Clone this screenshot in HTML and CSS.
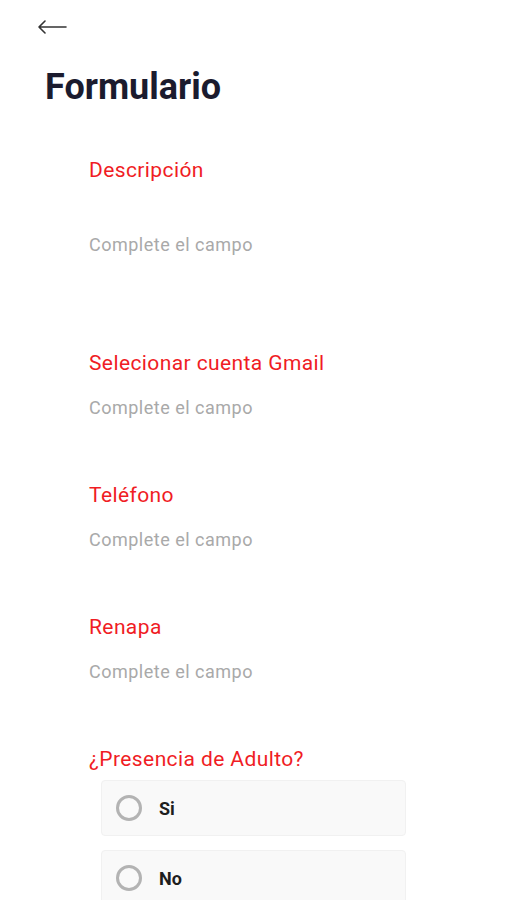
FILE: index.html
```html
<!DOCTYPE html>
<html lang="es">
<head>
	<meta charset="UTF-8">
	<title>Formulario</title>
	<link rel="stylesheet" href="styles.css">
</head>
<body>
	<div class="top">
		<svg class="back" width="30" height="14" viewBox="0 0 30 14">
			<path d="M29 7H2M8 1L2 7l6 6" fill="none" stroke="#333" stroke-width="1.6" stroke-linecap="round" stroke-linejoin="round"/>
		</svg>
	</div>
	<h1 class="title">Formulario</h1>
	<div class="form">
		<div class="field">
			<div class="label">Descripción</div>
			<div class="input multi">Complete el campo</div>
		</div>
		<div class="field">
			<div class="label">Selecionar cuenta Gmail</div>
			<div class="input">Complete el campo</div>
		</div>
		<div class="field">
			<div class="label">Teléfono</div>
			<div class="input">Complete el campo</div>
		</div>
		<div class="field">
			<div class="label">Renapa</div>
			<div class="input">Complete el campo</div>
		</div>
		<div class="field">
			<div class="label">¿Presencia de Adulto?</div>
			<div class="options">
				<div class="option"><span class="radio"></span><span class="opt-text">Si</span></div>
				<div class="option"><span class="radio"></span><span class="opt-text">No</span></div>
			</div>
		</div>
	</div>
</body>
</html>
```
FILE: styles.css
```css
*{box-sizing: border-box;}
body{margin: 0;background: #fff;font-family: Roboto, "Noto Sans", sans-serif;}
.top{height: 54px;padding: 20px 0 0 37px;}
.back{display: block;}
.title{margin: 13px 0 0 45px;font-size: 36px;line-height: 40px;font-weight: 700;color: #1b1b2e;}
.form{padding: 51px 0 0 89px;}
.label{font-size: 21px;line-height: 24px;letter-spacing: 0.4px;color: #f01c24;}
.input{font-size: 18px;line-height: 24px;letter-spacing: 0.5px;color: #a9a9a9;padding: 21px 0 63px;}
.input.multi{padding: 51px 0 94px;}
.options{display: flex;flex-direction: column;gap: 14px;padding: 9px 0 0 12px;}
.option{width: 305px;height: 56px;display: flex;align-items: center;gap: 17px;padding-left: 14px;background: #f9f9f9;border: 1px solid #f1f1f1;border-radius: 4px;}
.radio{width: 26px;height: 26px;border: 3px solid #b3b3b3;border-radius: 50%;}
.opt-text{font-size: 18px;font-weight: 700;color: #1e1e1e;}
```
